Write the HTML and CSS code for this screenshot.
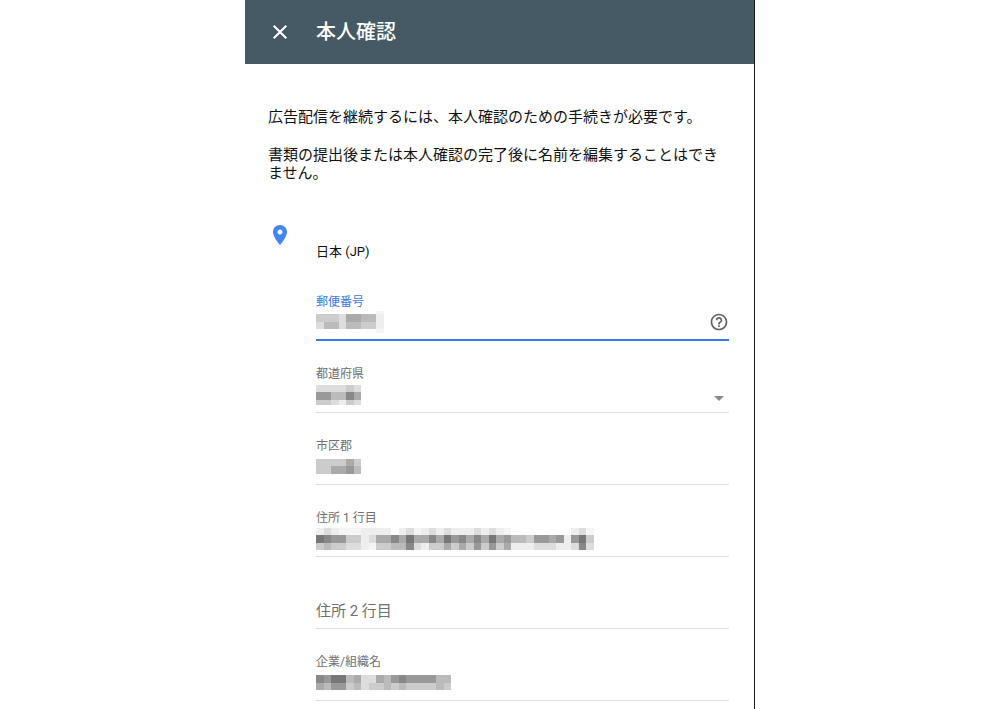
FILE: index.html
```html
<!DOCTYPE html>
<html lang="ja">
<head>
    <meta charset="UTF-8">
    <meta name="viewport" content="width=device-width, initial-scale=1.0">
    <title>本人確認</title>
    <link rel="stylesheet" href="styles.css">
</head>
<body>
    <div class="panel">
        <header class="panel-header">
            <button type="button" class="close-btn" aria-label="閉じる">
                <svg viewBox="0 0 24 24" width="24" height="24"><path d="M19 6.41 17.59 5 12 10.59 6.41 5 5 6.41 10.59 12 5 17.59 6.41 19 12 13.41 17.59 19 19 17.59 13.41 12z"/></svg>
            </button>
            <h1>本人確認</h1>
        </header>

        <main class="content">
            <div class="intro">
                <p>広告配信を継続するには、本人確認のための手続きが必要です。</p>
                <p>書類の提出後または本人確認の完了後に名前を編集することはできません。</p>
            </div>

            <!-- Address form -->
            <form class="address">
                <svg class="pin" viewBox="0 0 24 24" width="24" height="24"><path d="M12 2C8.13 2 5 5.13 5 9c0 5.25 7 13 7 13s7-7.75 7-13c0-3.87-3.13-7-7-7zm0 9.5c-1.38 0-2.5-1.12-2.5-2.5s1.12-2.5 2.5-2.5 2.5 1.12 2.5 2.5-1.12 2.5-2.5 2.5z"/></svg>
                <div class="fields">
                    <p class="country">日本 (JP)</p>

                    <div class="field active">
                        <label for="postal">郵便番号</label>
                        <div class="control">
                            <input type="text" id="postal">
                            <svg class="mosaic" data-rows="3:........f|8:cccdaabbe|7:dbbdbbcce|4:........f"></svg>
                            <button type="button" class="help-btn" aria-label="ヘルプ">
                                <svg viewBox="0 0 24 24" width="20" height="20"><path d="M11 18h2v-2h-2v2zm1-16C6.48 2 2 6.48 2 12s4.48 10 10 10 10-4.48 10-10S17.52 2 12 2zm0 18c-4.41 0-8-3.59-8-8s3.59-8 8-8 8 3.59 8 8-3.59 8-8 8zm0-14c-2.21 0-4 1.79-4 4h2c0-1.1.9-2 2-2s2 .9 2 2c0 2-3 1.75-3 5h2c0-2.25 3-2.5 3-5 0-2.21-1.79-4-4-4z"/></svg>
                            </button>
                        </div>
                    </div>

                    <div class="field">
                        <label for="prefecture">都道府県</label>
                        <div class="control">
                            <select id="prefecture"><option></option></select>
                            <svg class="mosaic" data-rows="7:ddddcd|8:99bb8a|5:ccdecd"></svg>
                            <svg class="arrow" viewBox="0 0 10 5" width="10" height="5"><path d="M0 0h10L5 5z"/></svg>
                        </div>
                    </div>

                    <div class="field">
                        <label for="city">市区郡</label>
                        <div class="control">
                            <input type="text" id="city">
                            <svg class="mosaic" data-rows="7:ccccac|8:ccaa9b"></svg>
                        </div>
                    </div>

                    <div class="field">
                        <label for="address1">住所 1 行目</label>
                        <div class="control">
                            <input type="text" id="address1">
                            <svg class="mosaic" data-rows="7:edefffeeee.edfededeeededef........edf|8:7899ccedaa8a7aa8a798a8a7a9bbc99a9e97c|7:cbccddefccbb8deccacac9c9caeeedddeed8d"></svg>
                        </div>
                    </div>

                    <div class="field empty">
                        <label for="address2">住所 2 行目</label>
                        <div class="control">
                            <input type="text" id="address2">
                        </div>
                    </div>

                    <div class="field">
                        <label for="company">企業/組織名</label>
                        <div class="control">
                            <input type="text" id="company">
                            <svg class="mosaic" data-rows="8:8977baddab989999bb|7:ab99cbdccbcbccccbc"></svg>
                        </div>
                    </div>
                </div>
            </form>
        </main>
    </div>

    <script src="script.js"></script>
</body>
</html>
```

FILE: styles.css
```css
* {
    margin: 0;
    padding: 0;
    box-sizing: border-box;
}

body {
    font-family: Roboto, 'Noto Sans CJK JP', sans-serif;
    background: #fff;
    color: #111;
}

svg {
    display: block;
    fill: currentColor;
}

button {
    border: none;
    background: none;
    color: inherit;
    cursor: pointer;
}

.panel {
    max-width: 510px;
    min-height: 100vh;
    margin: 0 auto;
    border-right: 1px solid #1a1a1a;
}

.panel-header {
    display: flex;
    align-items: center;
    gap: 24px;
    height: 64px;
    padding: 0 23px;
    background: #455a64;
    color: #fff;
}

h1 {
    font-size: 20px;
    font-weight: 500;
    line-height: 24px;
}

.content {
    padding: 44px 25px 0 23px;
}

.intro {
    display: flex;
    flex-direction: column;
    gap: 20px;
    font-size: 15px;
    line-height: 18px;
}

.address {
    display: flex;
    gap: 24px;
    margin-top: 41px;
}

.pin {
    flex: none;
    color: #4285f4;
}

.fields {
    flex: 1;
}

.country {
    padding: 19px 0 7px;
    font-size: 13px;
    line-height: 20px;
}

.field {
    display: flex;
    flex-direction: column;
    height: 72px;
    padding-top: 25px;
    border-bottom: 1px solid #e0e0e0;
}

.field label {
    font-size: 12px;
    line-height: 16px;
    color: #707070;
}

.control {
    position: relative;
    display: flex;
    flex: 1;
    align-items: center;
    padding-bottom: 5px;
}

.control input,
.control select {
    flex: 1;
    min-width: 0;
    height: 24px;
    border: none;
    outline: none;
    background: none;
    appearance: none;
    font: inherit;
    font-size: 15px;
}

.field.active {
    border-bottom: 2px solid #3b78e7;
}

.field.active label {
    color: #3b78e7;
}

.field.empty {
    flex-direction: row;
    align-items: center;
}

.field.empty label {
    font-size: 15px;
    line-height: 24px;
    padding-top: 12px;
}

.help-btn {
    color: #616161;
}

.mosaic {
    position: absolute;
    left: 0;
    top: 0;
    bottom: 5px;
    margin: auto 0;
}

.arrow {
    position: absolute;
    right: 5px;
    bottom: 11px;
    color: #8a8a8a;
    pointer-events: none;
}
```

FILE: script.js
```js
// Draw the masked values: each row is "height:shades", one hex digit per cell
const CELL = 7.5;

document.querySelectorAll('.mosaic').forEach(svg => {
    let y = 0;
    let width = 0;
    let rects = '';

    svg.dataset.rows.split('|').forEach(row => {
        const [height, shades] = row.split(':');
        [...shades].forEach((shade, i) => {
            if (shade === '.') return;
            const fill = shade === 'f' ? '#f5f5f5' : '#' + shade.repeat(3);
            rects += `<rect x="${i * CELL}" y="${y}" width="${CELL}" height="${height}" fill="${fill}"/>`;
        });
        y += Number(height);
        width = Math.max(width, shades.length * CELL);
    });

    svg.setAttribute('width', width);
    svg.setAttribute('height', y);
    svg.setAttribute('shape-rendering', 'crispEdges');
    svg.innerHTML = rects;
});
```
